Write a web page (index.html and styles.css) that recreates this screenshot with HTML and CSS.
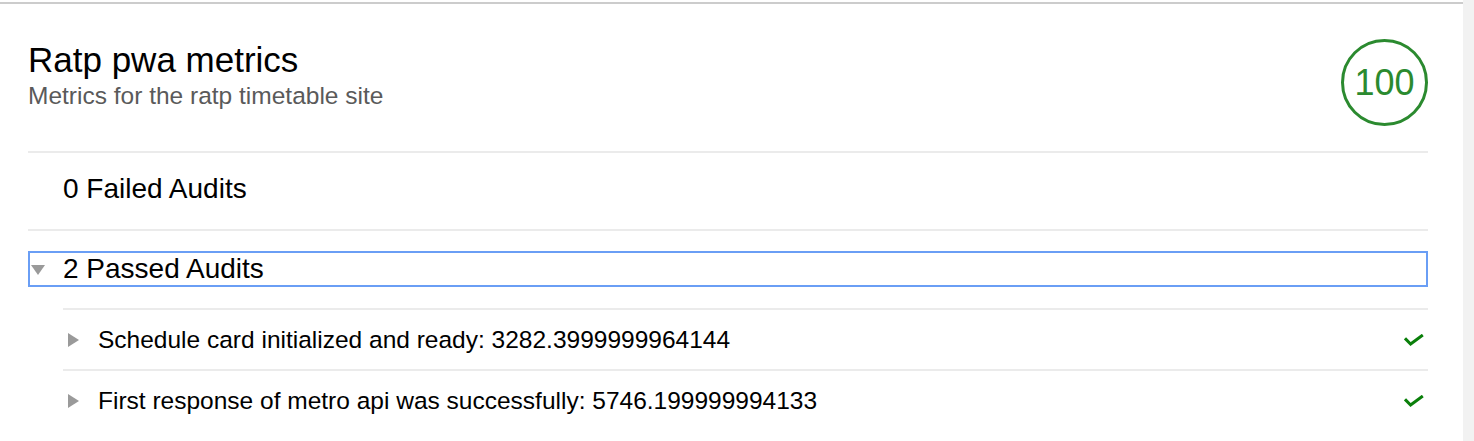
FILE: index.html
```html
<!DOCTYPE html>
<html lang="en">
<head>
<meta charset="utf-8">
<title>Ratp pwa metrics</title>
<link rel="stylesheet" href="styles.css">
</head>
<body>
<div class="page">
  <main class="report">
    <section class="category">
      <header class="cat-header">
        <div class="cat-titles">
          <h1 class="cat-title">Ratp pwa metrics</h1>
          <p class="cat-desc">Metrics for the ratp timetable site</p>
        </div>
        <div class="gauge"><span class="gauge-value">100</span></div>
      </header>

      <div class="group group-failed">
        <div class="group-summary">
          <span class="group-title">0 Failed Audits</span>
        </div>
      </div>

      <div class="group group-passed">
        <div class="group-summary focused">
          <span class="tri-down"></span>
          <span class="group-title">2 Passed Audits</span>
        </div>
        <ul class="audits">
          <li class="audit">
            <span class="tri-right"></span>
            <span class="audit-title">Schedule card initialized and ready: 3282.3999999964144</span>
            <svg class="check" width="20" height="12" viewBox="0 0 20 12"><path d="M1 4.3 L6.6 10 L18.8 1" fill="none" stroke="currentColor" stroke-width="3"/></svg>
          </li>
          <li class="audit">
            <span class="tri-right"></span>
            <span class="audit-title">First response of metro api was successfully: 5746.199999994133</span>
            <svg class="check" width="20" height="12" viewBox="0 0 20 12"><path d="M1 4.3 L6.6 10 L18.8 1" fill="none" stroke="currentColor" stroke-width="3"/></svg>
          </li>
        </ul>
      </div>
    </section>
  </main>
  <div class="scroll-track"></div>
</div>
</body>
</html>
```

FILE: styles.css
```css
* { box-sizing: border-box; }

html, body {
  margin: 0;
  padding: 0;
  background: #fff;
  font-family: "Liberation Sans", Arial, sans-serif;
  color: #000;
}

.page {
  display: flex;
  height: 441px;
  overflow: hidden;
}

.report {
  flex: 1;
  padding-top: 2px;
}

.scroll-track {
  width: 11px;
  background: #f2f2f2;
}

.category {
  border-top: 2px solid #cccccc;
  padding: 0 35px 0 28px;
}

.cat-header {
  display: flex;
  align-items: flex-start;
  justify-content: space-between;
  padding: 34px 0 25px 0;
}

.cat-title {
  margin: 0;
  font-size: 35px;
  line-height: 44px;
  font-weight: normal;
}

.cat-desc {
  margin: 0;
  font-size: 24.5px;
  line-height: 28px;
  color: #5a5a5a;
}

.gauge {
  margin-top: 1px;
  width: 87px;
  height: 87px;
  border: 3px solid #2b8a2f;
  border-radius: 50%;
  display: flex;
  align-items: center;
  justify-content: center;
}

.gauge-value {
  font-size: 36px;
  color: #2b8a2f;
  line-height: 1;
}

.group {
  border-top: 2px solid #ebebeb;
}

.group-failed {
  padding: 20px 0 24px;
}

.group-passed {
  padding-top: 20px;
}

.group-summary {
  display: flex;
  align-items: center;
  height: 32px;
  padding-left: 35px;
}

.group-summary.focused {
  height: 36px;
  padding-left: 33px;
  border: 2px solid #6a9ef5;
  position: relative;
}

.group-title {
  font-size: 28px;
  line-height: 32px;
}

.tri-down {
  position: absolute;
  left: 1px;
  top: 12px;
  width: 0;
  height: 0;
  border-left: 7px solid transparent;
  border-right: 7px solid transparent;
  border-top: 10px solid #9a9a9a;
}

.audits {
  list-style: none;
  margin: 21px 0 0 35px;
  padding: 0;
}

.audit {
  display: flex;
  align-items: center;
  height: 61px;
  border-top: 2px solid #ebebeb;
  padding: 0 4px 0 5px;
}

.tri-right {
  width: 0;
  height: 0;
  border-top: 7px solid transparent;
  border-bottom: 7px solid transparent;
  border-left: 11px solid #9a9a9a;
  margin-right: 19px;
}

.audit-title {
  flex: 1;
  font-size: 24.5px;
  line-height: 28px;
}

.check {
  color: #0a7f0a;
}
```
